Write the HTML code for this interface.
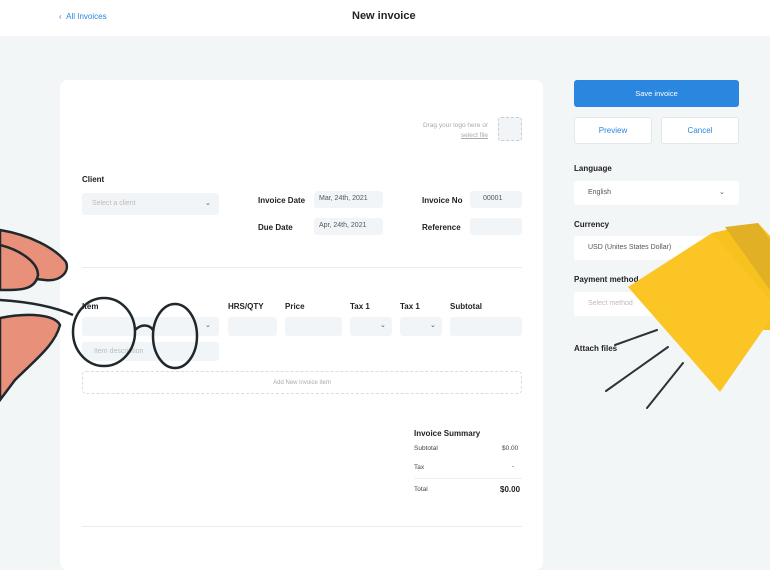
<!DOCTYPE html>
<html><head><style>
*{margin:0;padding:0;box-sizing:border-box}
body{width:770px;height:550px;overflow:hidden;background:#f3f6f7;font-family:"Liberation Sans",sans-serif;position:relative;color:#222}
.a{position:absolute}
.hdr{left:0;top:0;width:770px;height:36px;background:#fff}
.card{left:60px;top:80px;width:483px;height:490px;background:#fff;border-radius:8px}
.in{position:absolute;background:#f2f5f7;border-radius:3px;font-size:7px;color:#555}
.lbl{position:absolute;font-size:8px;font-weight:bold;color:#222}
.sm{position:absolute;font-size:6.5px;color:#444}
.chev{position:absolute;font-size:7px;color:#555}
.btn{position:absolute;background:#fff;border:1px solid #e3e8eb;border-radius:3px;font-size:8px;color:#2a86de;text-align:center}
</style></head><body>
<div class="a hdr"></div>
<div class="a" style="left:59px;top:12px;font-size:8px;color:#2a86de">‹ &nbsp;All Invoices</div>
<div class="a" style="left:352px;top:10px;font-size:11px;font-weight:bold">New invoice</div>
<div class="a card"></div>
<div class="a" style="left:410px;top:121px;font-size:6.5px;color:#aaa;text-align:right;width:78px;line-height:10px">Drag your logo here or<br><u>select file</u></div>
<div class="a" style="left:498px;top:117px;width:24px;height:24px;border:1px dashed #ccc;border-radius:3px;background:#f2f5f7"></div>
<div class="lbl" style="left:82px;top:175px">Client</div>
<div class="in" style="left:82px;top:193px;width:137px;height:22px;padding:7px 10px;color:#bbb">Select a client</div>
<div class="chev" style="left:205px;top:199px">⌄</div>
<div class="lbl" style="left:258px;top:196px">Invoice Date</div>
<div class="in" style="left:314px;top:191px;width:69px;height:17px;padding:4px 5px">Mar, 24th, 2021</div>
<div class="lbl" style="left:258px;top:223px">Due Date</div>
<div class="in" style="left:314px;top:218px;width:69px;height:17px;padding:4px 5px">Apr, 24th, 2021</div>
<div class="lbl" style="left:422px;top:196px">Invoice No</div>
<div class="in" style="left:470px;top:191px;width:52px;height:17px;padding:4px 13px">00001</div>
<div class="lbl" style="left:422px;top:223px">Reference</div>
<div class="in" style="left:470px;top:218px;width:52px;height:17px"></div>
<div class="a" style="left:82px;top:267px;width:440px;height:1px;background:#e8ecef"></div>
<div class="lbl" style="left:82px;top:302px">Item</div>
<div class="lbl" style="left:228px;top:302px">HRS/QTY</div>
<div class="lbl" style="left:285px;top:302px">Price</div>
<div class="lbl" style="left:350px;top:302px">Tax 1</div>
<div class="lbl" style="left:400px;top:302px">Tax 1</div>
<div class="lbl" style="left:450px;top:302px">Subtotal</div>
<div class="in" style="left:82px;top:317px;width:137px;height:19px"></div>
<div class="chev" style="left:205px;top:321px">⌄</div>
<div class="in" style="left:228px;top:317px;width:49px;height:19px"></div>
<div class="in" style="left:285px;top:317px;width:57px;height:19px"></div>
<div class="in" style="left:350px;top:317px;width:42px;height:19px"></div>
<div class="chev" style="left:380px;top:321px">⌄</div>
<div class="in" style="left:400px;top:317px;width:42px;height:19px"></div>
<div class="chev" style="left:430px;top:321px">⌄</div>
<div class="in" style="left:450px;top:317px;width:72px;height:19px"></div>
<div class="in" style="left:82px;top:342px;width:137px;height:19px;padding:6px 12px;color:#bbb">Item description</div>
<div class="a" style="left:82px;top:371px;width:440px;height:23px;border:1px dashed #d8dde0;border-radius:4px;font-size:6px;color:#aaa;text-align:center;line-height:22px">Add New invoice item</div>
<div class="lbl" style="left:414px;top:429px">Invoice Summary</div>
<div class="sm" style="left:414px;top:445px">Subtotal</div><div class="sm" style="left:502px;top:445px">$0.00</div>
<div class="sm" style="left:414px;top:464px">Tax</div><div class="sm" style="left:512px;top:463px">-</div>
<div class="a" style="left:414px;top:478px;width:108px;height:1px;background:#eee"></div>
<div class="sm" style="left:414px;top:486px">Total</div><div class="sm" style="left:500px;top:485px;font-weight:bold;font-size:8px;color:#222">$0.00</div>
<div class="a" style="left:82px;top:526px;width:440px;height:1px;background:#e8ecef"></div>

<div class="a" style="left:574px;top:80px;width:165px;height:27px;background:#2a86de;border-radius:3px;color:#fff;font-size:7.5px;text-align:center;line-height:27px">Save invoice</div>
<div class="btn" style="left:574px;top:117px;width:78px;height:27px;line-height:25px">Preview</div>
<div class="btn" style="left:661px;top:117px;width:78px;height:27px;line-height:25px">Cancel</div>
<div class="lbl" style="left:574px;top:164px">Language</div>
<div class="in" style="left:574px;top:181px;width:165px;height:24px;background:#fff;padding:8px 14px">English</div>
<div class="chev" style="left:719px;top:188px">⌄</div>
<div class="lbl" style="left:574px;top:220px">Currency</div>
<div class="in" style="left:574px;top:236px;width:165px;height:24px;background:#fff;padding:8px 14px">USD (Unites States Dollar)</div>
<div class="lbl" style="left:574px;top:275px">Payment method</div>
<div class="in" style="left:574px;top:292px;width:165px;height:24px;background:#fff;padding:8px 14px;color:#bbb">Select method</div>
<div class="lbl" style="left:574px;top:344px">Attach files</div>

<svg class="a" style="left:0;top:0" width="770" height="550">
<polygon points="712,233 758,223 770,236 770,330 740,330" fill="#f7c21e"/>
<polygon points="725,227 758,223 770,240 770,290" fill="#e2b024"/>
<polygon points="628,287 712,233 770,300 770,320 720,392" fill="#fbc526"/>
<g stroke="#2a3338" stroke-width="2" stroke-linecap="round">
<line x1="657" y1="330" x2="615" y2="345"/>
<line x1="668" y1="347" x2="606" y2="391"/>
<line x1="683" y1="363" x2="647" y2="408"/>
</g>
<g stroke="#1f282d" stroke-width="2.5" fill="#e8907a">
<path d="M0,230 C30,235 55,248 66,262 C70,272 60,282 45,280 C25,278 10,275 0,272 Z"/>
<path d="M0,245 C20,250 38,262 38,275 C35,292 15,290 0,290 Z"/>
<path d="M0,318 C30,312 55,315 60,325 C55,345 35,360 15,380 L0,400 Z"/>
</g>
<g stroke="#1f282d" stroke-width="2.5" fill="none">
<path d="M0,300 C30,302 55,307 73,315"/>
<ellipse cx="104" cy="332" rx="31" ry="34"/>
<ellipse cx="175" cy="336" rx="22" ry="32"/>
<path d="M135,330 C141,324 149,324 153,330"/>
</g>
</svg>
</body></html>
